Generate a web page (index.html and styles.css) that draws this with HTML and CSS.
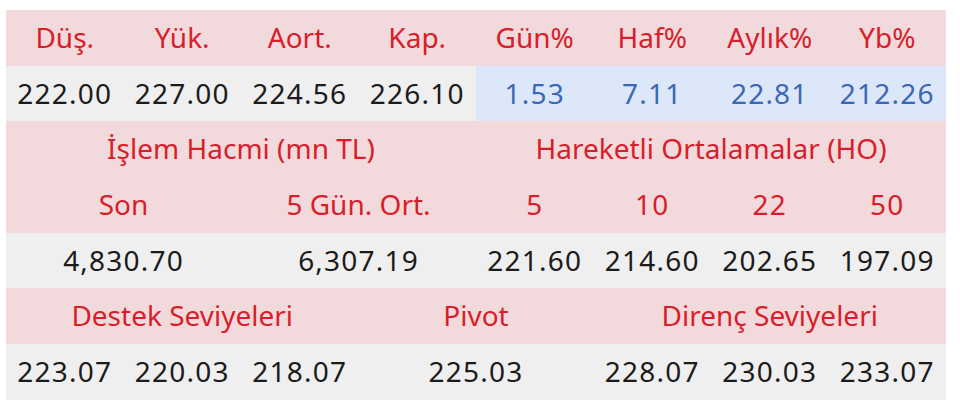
FILE: index.html
```html
<!DOCTYPE html>
<html lang="tr">
<head>
<meta charset="utf-8">
<link rel="stylesheet" href="styles.css">
</head>
<body>
<table class="stats">
  <colgroup>
    <col><col><col><col><col><col><col><col>
  </colgroup>
  <tr class="head">
    <td>Düş.</td><td>Yük.</td><td>Aort.</td><td>Kap.</td>
    <td>Gün%</td><td>Haf%</td><td>Aylık%</td><td>Yb%</td>
  </tr>
  <tr class="data">
    <td>222.00</td><td>227.00</td><td>224.56</td><td>226.10</td>
    <td class="pct">1.53</td><td class="pct">7.11</td><td class="pct">22.81</td><td class="pct">212.26</td>
  </tr>
  <tr class="head">
    <td colspan="4">İşlem Hacmi (mn TL)</td>
    <td colspan="4">Hareketli Ortalamalar (HO)</td>
  </tr>
  <tr class="head">
    <td colspan="2">Son</td><td colspan="2">5 Gün. Ort.</td>
    <td class="num">5</td><td class="num">10</td><td class="num">22</td><td class="num">50</td>
  </tr>
  <tr class="data">
    <td colspan="2">4,830.70</td><td colspan="2">6,307.19</td>
    <td>221.60</td><td>214.60</td><td>202.65</td><td>197.09</td>
  </tr>
  <tr class="head">
    <td colspan="3">Destek Seviyeleri</td><td colspan="2">Pivot</td><td colspan="3">Direnç Seviyeleri</td>
  </tr>
  <tr class="data">
    <td>223.07</td><td>220.03</td><td>218.07</td><td colspan="2">225.03</td>
    <td>228.07</td><td>230.03</td><td>233.07</td>
  </tr>
</table>
</body>
</html>
```
FILE: styles.css
```css
html, body {
  margin: 0;
  padding: 0;
  background: #ffffff;
}
body {
  padding: 10px 0 0 6px;
  font-family: "Noto Sans", "Open Sans", sans-serif;
}
.stats {
  width: 940px;
  table-layout: fixed;
  border-collapse: collapse;
  border-spacing: 0;
}
.stats td {
  height: 53.7px;
  padding: 0 0 2px;
  text-align: center;
  vertical-align: middle;
  font-size: 28px;
  line-height: 1;
  white-space: nowrap;
}
.head td {
  background: #f2d9dc;
  color: #d81e2a;
}
.head td.num {
  letter-spacing: 1.2px;
}
.data td {
  background: #efefef;
  color: #1b1b1b;
  letter-spacing: 1.2px;
}
.data td.pct {
  background: #dce7fa;
  color: #3b67b5;
}
```
